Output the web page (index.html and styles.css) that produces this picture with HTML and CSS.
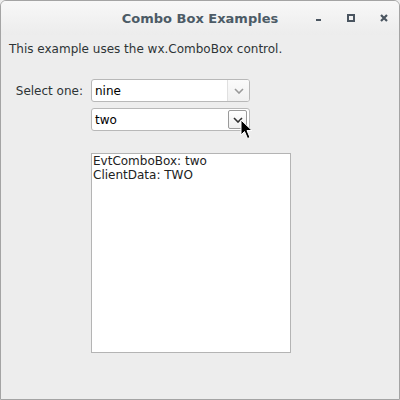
FILE: index.html
```html
<!DOCTYPE html>
<html>
<head>
<meta charset="utf-8">
<link rel="stylesheet" href="styles.css">
</head>
<body>
<div class="window">
  <div class="titlebar">
    <div class="title">Combo Box Examples</div>
    <div class="controls">
      <span class="btn-min"></span>
      <span class="btn-max"></span>
      <svg class="btn-close" width="8" height="8" viewBox="0 0 8 8"><path d="M1 1L7 7M7 1L1 7" stroke="#4a5560" stroke-width="2.2"/></svg>
    </div>
  </div>
  <div class="content">
    <p class="intro">This example uses the wx.ComboBox control.</p>
    <div class="row">
      <label class="label">Select one:</label>
      <div class="combos">
        <div class="combo">
          <span class="value">nine</span>
          <span class="arrow"><svg width="10" height="6" viewBox="0 0 10 6"><path d="M1 1L5 5L9 1" fill="none" stroke="#9a9a9a" stroke-width="1.6"/></svg></span>
        </div>
        <div class="combo">
          <span class="value">two</span>
          <span class="arrow hover"><svg width="10" height="6" viewBox="0 0 10 6"><path d="M1 1L5 5L9 1" fill="none" stroke="#303030" stroke-width="1.6"/></svg></span>
        </div>
        <div class="log">EvtComboBox: two<br>ClientData: TWO</div>
      </div>
    </div>
  </div>
  <svg class="cursor" width="14" height="22" viewBox="0 0 14 22"><path d="M1 1L1 16L4.5 12.5L7.5 19.5L10 18.5L7 11.5L12 11.5Z" fill="#000" stroke="#fff" stroke-width="1"/></svg>
</div>
</body>
</html>
```
FILE: styles.css
```css
html, body {
  margin: 0;
  padding: 0;
  width: 400px;
  height: 400px;
  overflow: hidden;
  background: #ededed;
}
.window {
  position: relative;
  width: 400px;
  height: 400px;
  box-sizing: border-box;
  border: 1px solid #a4a4a4;
  border-radius: 6px 6px 0 0;
  background: #ededed;
  font-family: "DejaVu Sans", sans-serif;
  color: #2e3436;
  overflow: hidden;
}
.titlebar {
  height: 34px;
  background: linear-gradient(#f8f8f8, #ececec);
  display: flex;
  align-items: center;
  justify-content: center;
  position: relative;
}
.title {
  font-weight: bold;
  font-size: 13px;
  color: #4c5b66;
}
.controls {
  position: absolute;
  right: 0;
  top: 0;
  height: 34px;
  display: flex;
  align-items: center;
}
.btn-min {
  width: 5px;
  height: 2px;
  background: #4a5560;
  margin-top: 4px;
  margin-right: 26px;
}
.btn-max {
  width: 4px;
  height: 4px;
  border: 2px solid #4a5560;
  margin-right: 25px;
}
.btn-close {
  margin-right: 11px;
}
.content {
  padding: 0 8px;
}
.intro {
  margin: 6px 0 0 0;
  font-size: 12px;
  line-height: 16px;
  color: #2e3436;
}
.row {
  display: flex;
  margin-top: 22px;
}
.label {
  font-size: 12px;
  width: 74px;
  margin-right: 8px;
  text-align: right;
  margin-top: 5px;
  color: #2e3436;
}
.combos {
  display: flex;
  flex-direction: column;
}
.combo {
  width: 159px;
  height: 23px;
  box-sizing: border-box;
  border: 1px solid #b8b8b8;
  border-radius: 3px;
  background: #fff;
  display: flex;
  align-items: center;
  margin-bottom: 6px;
}
.combo .value {
  flex: 1;
  padding-left: 3px;
  font-size: 12px;
  color: #000;
}
.combo .arrow {
  width: 22px;
  height: 21px;
  border-left: 1px solid #e0e0e0;
  background: linear-gradient(#fbfbfb, #f0f0f0);
  display: flex;
  align-items: center;
  justify-content: center;
  border-radius: 0 2px 2px 0;
  box-sizing: border-box;
}
.combo .arrow.hover {
  width: 19px;
  height: 19px;
  margin-right: 2px;
  border: 1px solid #9a9a9a;
  border-radius: 2px;
  background: linear-gradient(#ffffff, #eeeeee);
}
.log {
  margin-top: 16px;
  width: 200px;
  height: 200px;
  box-sizing: border-box;
  border: 1px solid #b4b4b4;
  background: #fff;
  font-size: 12px;
  line-height: 14px;
  padding: 0 1px;
  color: #222;
}
.cursor {
  position: absolute;
  left: 239px;
  top: 118px;
}
```
